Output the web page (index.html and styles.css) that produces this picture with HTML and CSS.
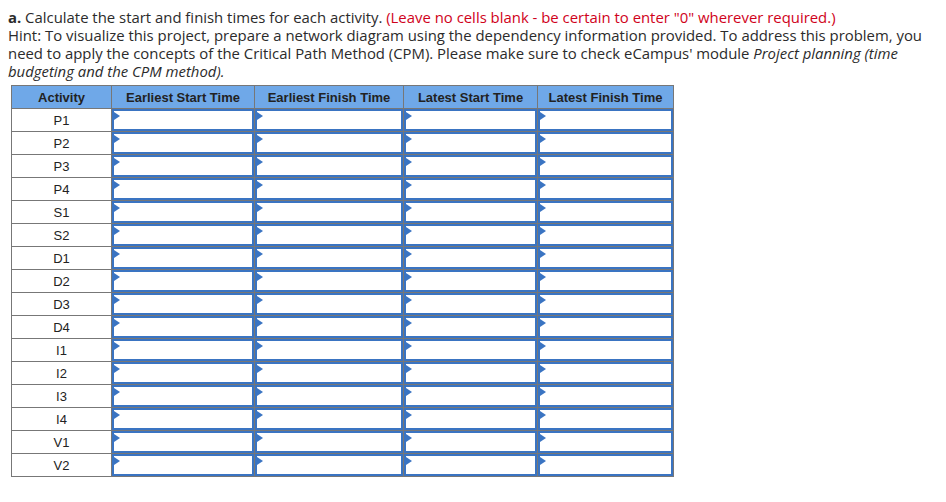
FILE: index.html
```html
<!DOCTYPE html>
<html>
<head>
<meta charset="utf-8">
<link rel="stylesheet" href="styles.css">
</head>
<body>
<div class="question">
<p class="prompt"><b>a.</b> Calculate the start and finish times for each activity. <span class="req">(Leave no cells blank - be certain to enter "0" wherever required.)</span><br>Hint: To visualize this project, prepare a network diagram using the dependency information provided. To address this problem, you need to apply the concepts of the Critical Path Method (CPM). Please make sure to check eCampus' module <i>Project planning (time budgeting and the CPM method).</i></p>
<table class="grid">
<thead>
<tr><th class="c-act">Activity</th><th class="c-es">Earliest Start Time</th><th class="c-ef">Earliest Finish Time</th><th class="c-ls">Latest Start Time</th><th class="c-lf">Latest Finish Time</th></tr>
</thead>
<tbody id="rows"></tbody>
</table>
</div>
<script src="app.js"></script>
</body>
</html>
```
FILE: app.js
```js
const acts = ["P1","P2","P3","P4","S1","S2","D1","D2","D3","D4","I1","I2","I3","I4","V1","V2"];
const tb = document.getElementById("rows");
acts.forEach(a => {
  const tr = document.createElement("tr");
  let h = '<td class="act">' + a + '</td>';
  for (let i = 0; i < 4; i++) {
    h += '<td class="cell"><div class="inp"><span class="tri"></span></div></td>';
  }
  tr.innerHTML = h;
  tb.appendChild(tr);
});
```
FILE: styles.css
```css
body {
  margin: 8px;
  font-family: "Open Sans", "Liberation Sans", sans-serif;
  color: #222;
  background: #fff;
}
.prompt {
  margin: 0;
  font-size: 14.9px;
  line-height: 18px;
  color: #2b2b2b;
}
.req { color: #d0021b; }
.grid {
  margin: 5px 0 0 3px;
  border-collapse: collapse;
  font-family: "Liberation Sans", Arial, sans-serif;
  font-size: 13px;
}
.grid th {
  background: #6fa8e8;
  border: 1px solid #777;
  height: 22px;
  padding: 0;
  font-weight: bold;
  color: #222;
  text-align: center;
}
.c-act { width: 99px; }
.c-es { width: 142px; }
.c-ef { width: 148px; }
.c-ls { width: 133px; }
.c-lf { width: 135px; }
.grid td {
  border: 1px solid #777;
  height: 22px;
  padding: 0;
}
.act { text-align: center; color: #222; }
.cell { padding: 0; }
.inp {
  position: relative;
  box-sizing: border-box;
  height: 22px;
  border: 2px solid #3a74c2;
  background: #fff;
}
.tri {
  position: absolute;
  left: 0;
  top: 1px;
  width: 0;
  height: 0;
  border-top: 4px solid transparent;
  border-bottom: 4px solid transparent;
  border-left: 6px solid #3a74c2;
}
```
